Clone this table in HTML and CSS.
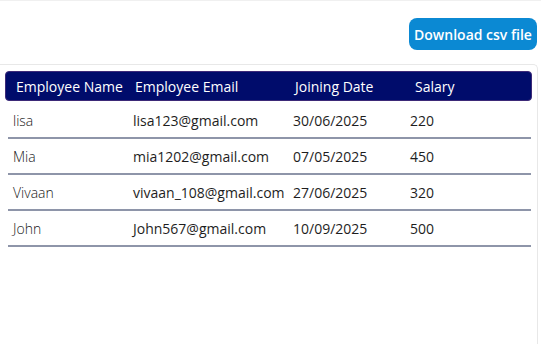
FILE: index.html
```html
<!DOCTYPE html>
<html lang="en">
<head>
    <meta charset="UTF-8">
    <meta name="viewport" content="width=device-width, initial-scale=1.0">
    <title>Employees</title>
    <link rel="stylesheet" href="styles.css">
</head>
<body>
    <div class="page">
        <div class="toolbar">
            <button class="download-button">Download csv file</button>
        </div>

        <div class="card">
            <div class="table-header">
                <span>Employee Name</span>
                <span>Employee Email</span>
                <span>Joining Date</span>
                <span>Salary</span>
            </div>
            <div class="table-body">
                <div class="table-row">
                    <span class="name">lisa</span>
                    <span>lisa123@gmail.com</span>
                    <span>30/06/2025</span>
                    <span>220</span>
                </div>
                <div class="table-row">
                    <span class="name">Mia</span>
                    <span>mia1202@gmail.com</span>
                    <span>07/05/2025</span>
                    <span>450</span>
                </div>
                <div class="table-row">
                    <span class="name">Vivaan</span>
                    <span>vivaan_108@gmail.com</span>
                    <span>27/06/2025</span>
                    <span>320</span>
                </div>
                <div class="table-row">
                    <span class="name">John</span>
                    <span>John567@gmail.com</span>
                    <span>10/09/2025</span>
                    <span>500</span>
                </div>
            </div>
        </div>
    </div>
</body>
</html>
```

FILE: styles.css
```css
body {
    margin: 0;
    font-family: 'Open Sans', sans-serif;
    background-color: #ffffff;
}

.page {
    height: 344px;
    border-top: 1px solid #f0f0f0;
    box-sizing: border-box;
    display: flex;
    flex-direction: column;
}

.toolbar {
    display: flex;
    justify-content: flex-end;
    padding: 17px 4px 0 0;
    height: 46px;
}

.download-button {
    width: 128px;
    height: 32px;
    padding: 0;
    border: none;
    border-radius: 8px;
    background-color: #0b89d3;
    color: #ffffff;
    font-family: 'Open Sans', sans-serif;
    font-size: 14px;
    font-weight: 600;
    cursor: pointer;
}

.card {
    flex: 1;
    width: 538px;
    box-sizing: border-box;
    border-top: 1px solid #e8e8e8;
    border-right: 1px solid #e8e8e8;
    border-top-right-radius: 5px;
    padding: 6px 5px 0 5px;
}

.table-header {
    display: grid;
    grid-template-columns: 119px 160px 120px 1fr;
    align-items: center;
    height: 30px;
    box-sizing: border-box;
    padding-left: 10px;
    background-color: #000c6b;
    border: 1px solid #3d2a78;
    border-radius: 4px;
    color: #ffffff;
    font-size: 14px;
}

.table-body {
    margin-top: 2px;
    padding: 0 1px 0 3px;
}

.table-row {
    display: grid;
    grid-template-columns: 120px 160px 117px 1fr;
    align-items: center;
    height: 34px;
    padding-left: 5px;
    border-bottom: 2px solid #8e95a9;
    color: #1e1e1e;
    font-size: 14px;
}

.table-row .name {
    font-weight: 300;
    color: #1a1a1a;
}
```
